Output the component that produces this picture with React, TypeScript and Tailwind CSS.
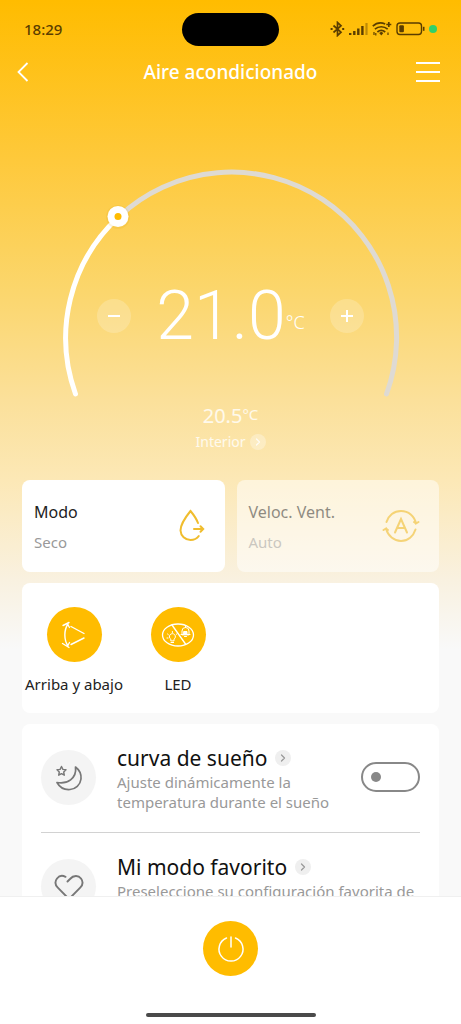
import { useState } from "react";
import type { ReactNode } from "react";
import { ChevronRight } from "lucide-react";

const MoreDot = ({ className }: { className: string }) => (
  <span className={`flex size-4 items-center justify-center rounded-full ${className}`}>
    <ChevronRight size={12} strokeWidth={2.5} />
  </span>
);

function StatusBar() {
  return (
    <div className="grid h-[58px] grid-cols-3 items-center px-6 text-[#5a3d00]">
      <span className="text-[15px] font-medium">18:29</span>
      <span className="h-[33px] w-[97px] justify-self-center rounded-full bg-black" />
      <div className="flex items-center gap-1 justify-self-end">
        <svg width="15" height="16" viewBox="0 0 15 16" fill="none" stroke="currentColor" strokeWidth="1.7">
          <path d="M3.5 4.5 11 11.2 7.5 14.5V1.5L11 4.8 3.5 11.5" />
          <path d="M.6 8h2M12.2 8h2" strokeWidth="2" />
        </svg>
        <svg width="19" height="14" viewBox="0 0 19 14" fill="currentColor">
          <path d="M0 11h2.4v2H0zM4.1 9h2.4v4H4.1zM8.1 6.5h2.4V13H8.1zM12.2 4h2.4v9h-2.4z" />
          <path d="M16.4 1h2.2v12h-2.2z" opacity=".4" />
        </svg>
        <svg width="20" height="16" viewBox="0 0 20 16" fill="none" stroke="currentColor" strokeWidth="1.7">
          <path d="M.8 5.2C4.5 1.8 9 1.2 13.2 3M2.9 8.2c3.7-3.3 9-3.3 12.8 0M5.4 11c2.3-2 5.5-2 7.8 0" />
          <path d="M16.8 1v5M14.3 3.5h5" />
          <path d="m7.2 12 2.1-1.2 2.1 1.2-2.1 2.5z" fill="currentColor" stroke="none" />
          <path d="M2 11v3M3.8 12v2.500M16 11.500v2.500" strokeWidth="1.2" />
        </svg>
        <svg width="29" height="14" viewBox="0 0 29 14" fill="none">
          <rect x="1" y="1" width="24.5" height="11.5" rx="3" stroke="currentColor" strokeWidth="1.4" />
          <rect x="3.3" y="3.2" width="4.6" height="7" rx="1" fill="currentColor" />
          <path d="M27.7 4.8v4" stroke="currentColor" strokeWidth="1.6" />
        </svg>
        <span className="size-2 rounded-full bg-[#2fd06a]" />
      </div>
    </div>
  );
}

function Gauge() {
  const [target, setTarget] = useState(21);

  return (
    <section className="mt-[74px] flex flex-col items-center text-white">
      <div className="grid w-[344px] place-items-center">
        <svg
          className="col-start-1 row-start-1"
          width="344"
          height="244"
          viewBox="0 0 344 244"
          fill="none"
          strokeWidth="5"
          strokeLinecap="round"
        >
          <path d="M59.5 57A165 165 0 0 1 327.5 234" stroke="#dedad3" />
          <path d="M16.5 234A165 165 0 0 1 59.5 57" stroke="#fff" />
          <circle cx="59" cy="57" r="12" fill="#d99a00" opacity=".12" />
          <circle cx="59" cy="56.5" r="10.5" fill="#fff" />
          <circle cx="59" cy="56.5" r="3.5" fill="#ffbc00" />
        </svg>
        <div className="col-start-1 row-start-1 mt-[68px] flex w-[268px] items-center justify-between">
          <button
            type="button"
            aria-label="Bajar temperatura"
            onClick={() => setTarget(target - 0.5)}
            className="flex size-[34px] items-center justify-center rounded-full bg-white/20"
          >
            <span className="h-0.5 w-3 bg-white" />
          </button>
          <p className="flex items-center">
            <span className="font-[Roboto,sans-serif] text-[68px] leading-none font-light">{target.toFixed(1)}</span>
            <span className="mt-3 text-lg leading-none font-light">°C</span>
          </p>
          <button
            type="button"
            aria-label="Subir temperatura"
            onClick={() => setTarget(target + 0.5)}
            className="grid size-[34px] place-items-center rounded-full bg-white/20"
          >
            <span className="col-start-1 row-start-1 h-0.5 w-3 bg-white" />
            <span className="col-start-1 row-start-1 h-3 w-0.5 bg-white" />
          </button>
        </div>
      </div>
      <p className="flex text-xl leading-6 text-white/80">
        20.5<span className="text-[15px] leading-5">°C</span>
      </p>
      <button type="button" className="mt-1 flex items-center gap-1 text-sm text-white/80">
        Interior
        <MoreDot className="bg-white/30" />
      </button>
    </section>
  );
}

function DryIcon() {
  return (
    <svg width="28" height="34" viewBox="0 0 28 34" fill="none" stroke="#f0bd2e" strokeWidth="2" strokeLinecap="round">
      <path d="M20 14C18.3 9.5 15.4 5.5 12.5 2 8 7.5 2.500 15 2.500 21.5a10 10 0 0 0 10 9.500c3.5 0 6.500-1.500 8.300-4" />
      <path d="M16 20h9M22.500 17.300 25.200 20l-2.700 2.700" />
    </svg>
  );
}

function AutoIcon() {
  return (
    <svg width="38" height="34" viewBox="0 0 38 34" fill="none" stroke="#f0bd2e" strokeWidth="2" strokeLinecap="round">
      <path d="M4.500 13C6.500 6.500 12 2 19 2c7.500 0 13.500 5 15 12.500l2.500-1.500M34 14.500l-2-1.500" />
      <path d="M33.500 20.500C31.500 27 26 32 19 32c-7 0-13-5-15-12.500L1.500 21M4 19.500l2 1.500" />
      <path d="M13 23.500 19 10l6 13.500M15 19h8" />
    </svg>
  );
}

type ModeCardProps = { title: string; value: string; icon: ReactNode; disabled?: boolean };

function ModeCard({ title, value, icon, disabled }: ModeCardProps) {
  return (
    <button
      type="button"
      disabled={disabled}
      className="flex h-[92px] items-center justify-between rounded-lg bg-white pr-[19px] pl-3 text-left disabled:bg-white/50"
    >
      <span className={disabled ? "opacity-50" : ""}>
        <span className="block text-base leading-6 text-[#222]">{title}</span>
        <span className="mt-2 block text-[15px] leading-5 text-[#999]">{value}</span>
      </span>
      <span className={disabled ? "opacity-60" : ""}>{icon}</span>
    </button>
  );
}

function SwingIcon() {
  return (
    <svg width="28" height="28" viewBox="0 0 28 28" fill="none" stroke="#fff" strokeWidth="1.4" strokeLinecap="round">
      <path d="M8 3C3.800 9 3.800 19 8 25M3 4.500 9 1.500M7.500 3l2 3.500M2.500 22.500 9 26.500M7.500 25l2-3.500" />
      <path d="M11 5.500 24 12.500M11 23.500 24 17" />
    </svg>
  );
}

function LedIcon() {
  return (
    <svg width="34" height="26" viewBox="0 0 34 26" fill="none" stroke="#fff" strokeWidth="1.3" strokeLinecap="round">
      <ellipse cx="17" cy="13" rx="15.5" ry="11" />
      <path d="m11 3 13.500 19" />
      <g strokeWidth="1">
        <path d="M9.800 18.500v-1.300a3 3 0 1 1 3.200 0v1.300zM10 20.500h2.600M11.400 9.500v1M6.500 12l.8.600M16 11.800l-.8.600M6 16h1" />
        <path d="M21 12.500V9a3.500 3.500 0 0 1 7 0v3.500zM20 12.500h9M23.500 14.500h2M24.500 4v1.500" />
        <path d="M23 9.500h3v2.500h-3z" fill="#fff" />
      </g>
    </svg>
  );
}

function SleepIcon() {
  return (
    <svg width="28" height="28" viewBox="0 0 28 28" fill="none" stroke="#777" strokeWidth="1.700" strokeLinejoin="round">
      <path d="M20.500 3C24.500 6 26.500 10 26 15c-.7 6-5.500 10-11 10.500C9 26 4.500 23 2 18.500c10 2 20-4 18.500-15.500z" />
      <path d="m6.500 2.500 1.400 2.900 3.100.4-2.300 2.200.6 3.200-2.800-1.600-2.800 1.600.6-3.200L2 5.800l3.100-.4z" strokeWidth="1.4" />
    </svg>
  );
}

function HeartIcon() {
  return (
    <svg width="30" height="26" viewBox="0 0 30 26" fill="none" stroke="#777" strokeWidth="1.9" strokeLinecap="round">
      <path d="M13.500 7.500 16 5C19.500 1 24.500 1.200 27 4.500c2.200 3 1.800 6.500-.8 9.200l-9.400 9.500c-1.200 1.200-2.400 1.200-3.600 0L3.800 13.700C1.200 11 .8 7.500 3 4.500 5 2 8.500 1.300 11.500 2.800" />
    </svg>
  );
}

type FeatureProps = { title: string; text: string; icon: ReactNode; children?: ReactNode };

function Feature({ title, text, icon, children }: FeatureProps) {
  return (
    <li className="flex h-[109px] items-start pt-[26px]">
      <span className="flex size-[55px] shrink-0 items-center justify-center rounded-full bg-[#f4f4f4]">{icon}</span>
      <div className="-mt-1.5 ml-[21px] min-w-0 flex-1">
        <button type="button" className="flex items-center gap-2 text-[21px] leading-7 text-[#111]">
          {title}
          <MoreDot className="bg-[#efefef] text-[#999]" />
        </button>
        <p className="text-[15px] leading-5 text-[#999]">{text}</p>
      </div>
      {children}
    </li>
  );
}

export default function App() {
  const [sleepCurve, setSleepCurve] = useState(false);

  return (
    <div className="flex h-screen flex-col bg-[#f9f9f9] font-['Noto_Sans',sans-serif]">
      <main className="min-h-0 flex-1 overflow-hidden">
        <div className="bg-[linear-gradient(180deg,#ffbc00_0px,#fec93b_160px,#fbd66c_290px,#fbe09a_400px,#fce8b6_480px,#f9f1e0_580px,#f9f9f9_650px)]">
          <StatusBar />
          <header className="grid h-7 grid-cols-[24px_1fr_24px] items-center px-[21px] text-white">
            <button type="button" aria-label="Volver" className="-ml-1">
              <svg width="12" height="20" viewBox="0 0 12 20" fill="none" stroke="currentColor" strokeWidth="1.8">
                <path d="M10.5 1 1.500 10l9 9" />
              </svg>
            </button>
            <h1 className="text-center text-[19px] font-medium">Aire acondicionado</h1>
            <button type="button" aria-label="Menú" className="flex flex-col gap-[7px]">
              <span className="h-0.5 w-6 bg-white" />
              <span className="h-0.5 w-6 bg-white" />
              <span className="h-0.5 w-6 bg-white" />
            </button>
          </header>

          <Gauge />

          <div className="mt-7 space-y-[11px] px-[22px]">
            <section className="grid grid-cols-2 gap-3">
              <ModeCard title="Modo" value="Seco" icon={<DryIcon />} />
              <ModeCard title="Veloc. Vent." value="Auto" icon={<AutoIcon />} disabled />
            </section>

            <section className="flex h-[130px] rounded-lg bg-white pt-6">
              <button type="button" className="flex w-[104px] flex-col items-center gap-3 text-[15px] leading-5 text-[#222]">
                <span className="flex size-[55px] items-center justify-center rounded-full bg-[#ffbc00]">
                  <SwingIcon />
                </span>
                Arriba y abajo
              </button>
              <button type="button" className="flex w-[104px] flex-col items-center gap-3 text-[15px] leading-5 text-[#222]">
                <span className="flex size-[55px] items-center justify-center rounded-full bg-[#ffbc00]">
                  <LedIcon />
                </span>
                LED
              </button>
            </section>

            <ul className="divide-y divide-[#d2d2d2] rounded-lg bg-white px-[19px]">
              <Feature
                title="curva de sueño"
                text="Ajuste dinámicamente la temperatura durante el sueño"
                icon={<SleepIcon />}
              >
                <input
                  type="checkbox"
                  role="switch"
                  aria-label="curva de sueño"
                  checked={sleepCurve}
                  onChange={(event) => setSleepCurve(event.target.checked)}
                  className="mt-3 flex h-[30px] w-[59px] appearance-none items-center rounded-full border-2 border-[#888] px-2 before:size-2.5 before:rounded-full before:bg-[#888] checked:justify-end checked:border-[#ffbc00] checked:before:bg-[#ffbc00]"
                />
              </Feature>
              <Feature
                title="Mi modo favorito"
                text="Preseleccione su configuración favorita de temperatura"
                icon={<HeartIcon />}
              />
            </ul>
          </div>
        </div>
      </main>

      <footer className="flex h-32 shrink-0 flex-col items-center justify-between border-t border-[#f0f0f0] bg-white pt-6 pb-[7px]">
        <button
          type="button"
          aria-label="Encender o apagar"
          className="flex size-[55px] items-center justify-center rounded-full bg-[#ffbc00]"
        >
          <svg width="28" height="28" viewBox="0 0 28 28" fill="none" stroke="#fff" strokeWidth="1.5" strokeLinecap="round">
            <path d="M9.500 3A12 12 0 1 0 18.500 3M14 2v10" />
          </svg>
        </button>
        <span className="h-1 w-[170px] rounded-full bg-[#4a4a4a]" />
      </footer>
    </div>
  );
}
